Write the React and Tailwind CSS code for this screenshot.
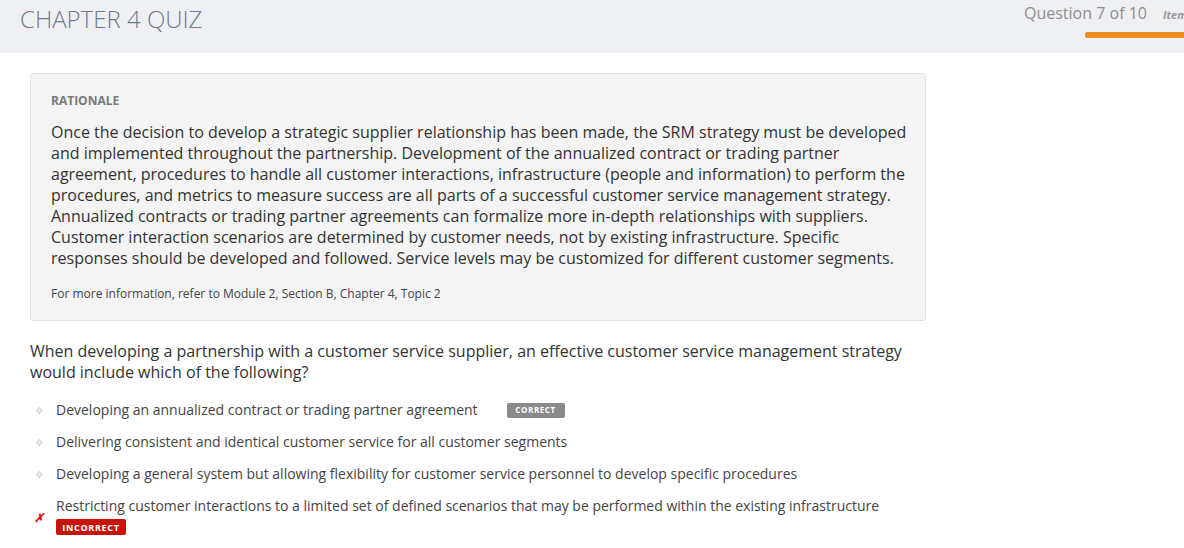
import React from 'react';

const options = [
    { text: 'Developing an annualized contract or trading partner agreement', status: 'correct' },
    { text: 'Delivering consistent and identical customer service for all customer segments' },
    { text: 'Developing a general system but allowing flexibility for customer service personnel to develop specific procedures' },
    { text: 'Restricting customer interactions to a limited set of defined scenarios that may be performed within the existing infrastructure', status: 'incorrect' },
];

const Bullet = () => <span className="block w-[5px] h-[5px] rotate-45 border border-[#d2d2d2] bg-[#ececec]" />;

const App = () => {
    return (
        <div className="w-[1184px] h-[548px] overflow-hidden bg-white font-['Open_Sans',sans-serif] text-[#333]">
            {/* Header */}
            <div className="h-[53px] bg-[#eff0f4] flex overflow-hidden">
                <div className="w-[1024px] shrink-0 pl-5 pt-[3px]">
                    <h1 className="text-[24px] leading-[32px] font-light text-[#6d7b8b]">CHAPTER 4 QUIZ</h1>
                </div>
                <div className="shrink-0 w-[180px]">
                    <div className="flex items-baseline pt-[1px]">
                        <span className="text-[16px] leading-[24px] text-[#8e8e8e]">Question 7 of 10</span>
                        <span className="ml-4 text-[11px] font-bold italic text-[#9a9a9a]">Item 7</span>
                    </div>
                    <div className="ml-[61px] mt-[7px] h-[6px] w-[120px] rounded-l-[2px] bg-[#f28b1d]" />
                </div>
            </div>

            <div className="px-[30px] pt-5">
                {/* Rationale */}
                <div className="w-[896px] rounded-[3px] border border-[#e2e2e2] bg-[#f4f4f4] pl-5 pr-[6px] pt-[19px] pb-[18px]">
                    <h2 className="text-[12px] leading-4 font-bold text-[#7a7a7a]">RATIONALE</h2>
                    <p className="mt-[13px] text-[16px] leading-[21px] text-[#333]">
                        Once the decision to develop a strategic supplier relationship has been made, the SRM strategy must be developed and implemented throughout the partnership. Development of the annualized contract or trading partner agreement, procedures to handle all customer interactions, infrastructure (people and information) to perform the procedures, and metrics to measure success are all parts of a successful customer service management strategy. Annualized contracts or trading partner agreements can formalize more in-depth relationships with suppliers. Customer interaction scenarios are determined by customer needs, not by existing infrastructure. Specific responses should be developed and followed. Service levels may be customized for different customer segments.
                    </p>
                    <p className="mt-[17px] text-[12px] leading-4 text-[#444]">For more information, refer to Module 2, Section B, Chapter 4, Topic 2</p>
                </div>

                {/* Question */}
                <p className="mt-5 w-[896px] text-[16px] leading-[21px] text-[#333]">
                    When developing a partnership with a customer service supplier, an effective customer service management strategy would include which of the following?
                </p>

                <ul className="mt-[11px]">
                    {options.map((o, i) => (
                        <li key={i} className="flex items-start py-[6px]">
                            <div className="w-[26px] shrink-0 flex items-center justify-center h-[20px] pr-[8px]">
                                {o.status === 'incorrect' ? (
                                    <span className="mt-[24px] text-[12px] font-bold italic text-[#e3120b] leading-none">✗</span>
                                ) : (
                                    <Bullet />
                                )}
                            </div>
                            <div>
                                <div className="flex items-center">
                                    <span className="text-[14px] leading-[20px] text-[#444]">{o.text}</span>
                                    {o.status === 'correct' && (
                                        <span className="ml-[29px] inline-flex h-[15px] w-[58px] items-center justify-center rounded-[2px] bg-[#8a8a8a] text-[8px] font-bold tracking-[0.6px] text-white">
                                            CORRECT
                                        </span>
                                    )}
                                </div>
                                {o.status === 'incorrect' && (
                                    <div className="mt-[3px] flex h-[16px] w-[70px] items-center justify-center rounded-[2px] bg-[#c4140b] text-[9px] leading-none font-bold tracking-[0.7px] text-white">
                                        INCORRECT
                                    </div>
                                )}
                            </div>
                        </li>
                    ))}
                </ul>
            </div>
        </div>
    );
};

export default App;
